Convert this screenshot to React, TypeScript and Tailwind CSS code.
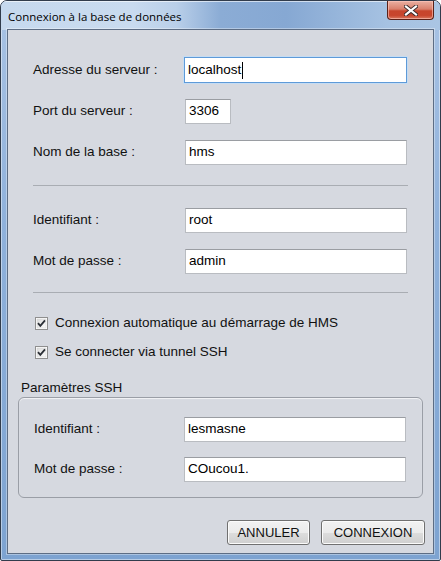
import React from "react";

const F = { fontFamily: '"Liberation Sans", Arial, sans-serif' };

function Field({ value, w, focused, caret }: { value: string; w?: string; focused?: boolean; caret?: boolean }) {
  return (
    <div
      className={
        "h-full flex items-center bg-white pl-[3px] text-[13.5px] text-black border " +
        (focused
          ? "border-[#5e9ad8] shadow-[0_0_0_1px_#c5dcf3] "
          : "border-[#b9bcc1] border-t-[#9a9da2] ") +
        (w ?? "flex-1")
      }
    >
      <span>{value}</span>
      {caret && <span className="w-px h-[17px] bg-black ml-px" />}
    </div>
  );
}

function Row({ label, children, h, mt, labelW }: { label: string; children: React.ReactNode; h: string; mt: string; labelW: string }) {
  return (
    <div className={"flex items-center " + h + " " + mt}>
      <div className={"shrink-0 text-[13.5px] text-[#111] " + labelW}>{label}</div>
      <div className="flex-1 flex h-full">{children}</div>
    </div>
  );
}

function Check({ label, mt }: { label: string; mt: string }) {
  return (
    <div className={"flex items-center h-[20px] pl-[27px] " + mt}>
      <svg width="13" height="13" viewBox="0 0 13 13" className="shrink-0">
        <defs>
          <linearGradient id="cb" x1="0" y1="0" x2="1" y2="1">
            <stop offset="0" stopColor="#dcdcdc" />
            <stop offset="1" stopColor="#fbfbfb" />
          </linearGradient>
        </defs>
        <rect x="0.5" y="0.5" width="12" height="12" fill="#fff" stroke="#8f8f8f" />
        <rect x="2" y="2" width="9" height="9" fill="url(#cb)" stroke="#d0d0d0" strokeWidth="0.5" />
        <path d="M3 6.2 L5.3 8.8 L10 3.3" fill="none" stroke="#2b2f36" strokeWidth="1.8" />
      </svg>
      <span className="ml-[7px] text-[13.5px] text-[#111]">{label}</span>
    </div>
  );
}

function Btn({ label, w }: { label: string; w: string }) {
  return (
    <div
      className={
        "h-full flex items-center justify-center rounded-[3px] border border-[#707070] text-[13px] text-[#111] shadow-[inset_0_0_0_1px_#fbfbfb] bg-[linear-gradient(180deg,#f2f2f2_0%,#ebebeb_50%,#dddddd_51%,#cfcfcf_100%)] " +
        w
      }
    >
      {label}
    </div>
  );
}

export default function App() {
  return (
    <div style={F} className="w-[441px] h-[561px] bg-white">
      <div className="w-[441px] h-[561px] flex flex-col border border-[#313c4c] rounded-t-[7px] rounded-b-[2px] overflow-hidden px-[6px] pb-[6px] bg-[linear-gradient(180deg,#a9c3e4_0%,#8fb1db_40%,#7da3d1_100%)] shadow-[inset_0_0_0_1px_rgba(255,255,255,0.45)] relative">
        <div className="absolute left-0 right-0 top-0 h-[29px] pointer-events-none bg-[linear-gradient(90deg,#c6d9ee_0%,#c9dbef_30%,#b9cfe9_40%,#8bacd5_50%,#86a8d3_65%,#a6c2e2_88%,#aac5e3_100%)] shadow-[inset_0_1px_0_rgba(255,255,255,0.6)]" />
        <div className="relative h-[28px] flex items-start justify-between shrink-0">
          <div className="pl-px pt-[6px] leading-[16px] text-black" style={{ fontFamily: '"Open Sans", "Noto Sans", sans-serif' }}>
            <span className="text-[11.5px]">Connexion à la base de données</span>
          </div>
          <div className="w-[47px] h-[19px] rounded-b-[4px] border border-t-0 border-[#5a2118] flex items-center justify-center shadow-[inset_0_0_0_1px_rgba(255,200,190,0.6)] bg-[linear-gradient(180deg,#eab0a2_0%,#d9806c_45%,#c7452c_55%,#c8452d_80%,#d8785f_100%)]">
            <svg width="14" height="11" viewBox="0 0 14 11">
              <path d="M2 1.5 L12 9.5 M12 1.5 L2 9.5" stroke="#3a2a2a" strokeWidth="4" strokeLinecap="square" />
              <path d="M2 1.5 L12 9.5 M12 1.5 L2 9.5" stroke="#ffffff" strokeWidth="2.2" strokeLinecap="square" />
            </svg>
          </div>
        </div>
        <div className="relative flex-1 flex flex-col border border-[#5d6d84] bg-[#d6d9e0] shadow-[0_0_0_1px_rgba(255,255,255,0.35)]">
          <div className="pl-[25px] pr-[26px]">
            <Row label="Adresse du serveur :" h="h-[26px]" mt="mt-[27px]" labelW="w-[151px]">
              <Field value="localhost" focused caret />
            </Row>
            <Row label="Port du serveur :" h="h-[25px]" mt="mt-[16px]" labelW="w-[152px]">
              <Field value="3306" w="w-[46px]" />
            </Row>
            <Row label="Nom de la base :" h="h-[25px]" mt="mt-[16px]" labelW="w-[152px]">
              <Field value="hms" />
            </Row>
          </div>
          <div className="mt-[20px] mx-[25px] h-px bg-[#a9adb3]" />
          <div className="pl-[25px] pr-[26px]">
            <Row label="Identifiant :" h="h-[25px]" mt="mt-[22px]" labelW="w-[152px]">
              <Field value="root" />
            </Row>
            <Row label="Mot de passe :" h="h-[25px]" mt="mt-[16px]" labelW="w-[152px]">
              <Field value="admin" />
            </Row>
          </div>
          <div className="mt-[18px] mx-[25px] h-px bg-[#a9adb3]" />
          <Check label="Connexion automatique au démarrage de HMS" mt="mt-[20px]" />
          <Check label="Se connecter via tunnel SSH" mt="mt-[9px]" />
          <div className="mt-[18px] pl-[13px] h-[17px] flex items-center text-[13.5px] text-[#111]">Paramètres SSH</div>
          <div className="mx-[10px] h-[101px] rounded-[6px] border border-[#9a9ea6] shadow-[inset_0_1px_1px_rgba(255,255,255,0.7)] pl-[15px] pr-[16px]">
            <Row label="Identifiant :" h="h-[25px]" mt="mt-[19px]" labelW="w-[150px]">
              <Field value="lesmasne" />
            </Row>
            <Row label="Mot de passe :" h="h-[25px]" mt="mt-[15px]" labelW="w-[150px]">
              <Field value="COucou1." />
            </Row>
          </div>
          <div className="mt-[22px] h-[25px] flex justify-end gap-[11px] pr-[8px]">
            <Btn label="ANNULER" w="w-[83px]" />
            <Btn label="CONNEXION" w="w-[104px]" />
          </div>
        </div>
      </div>
    </div>
  );
}
